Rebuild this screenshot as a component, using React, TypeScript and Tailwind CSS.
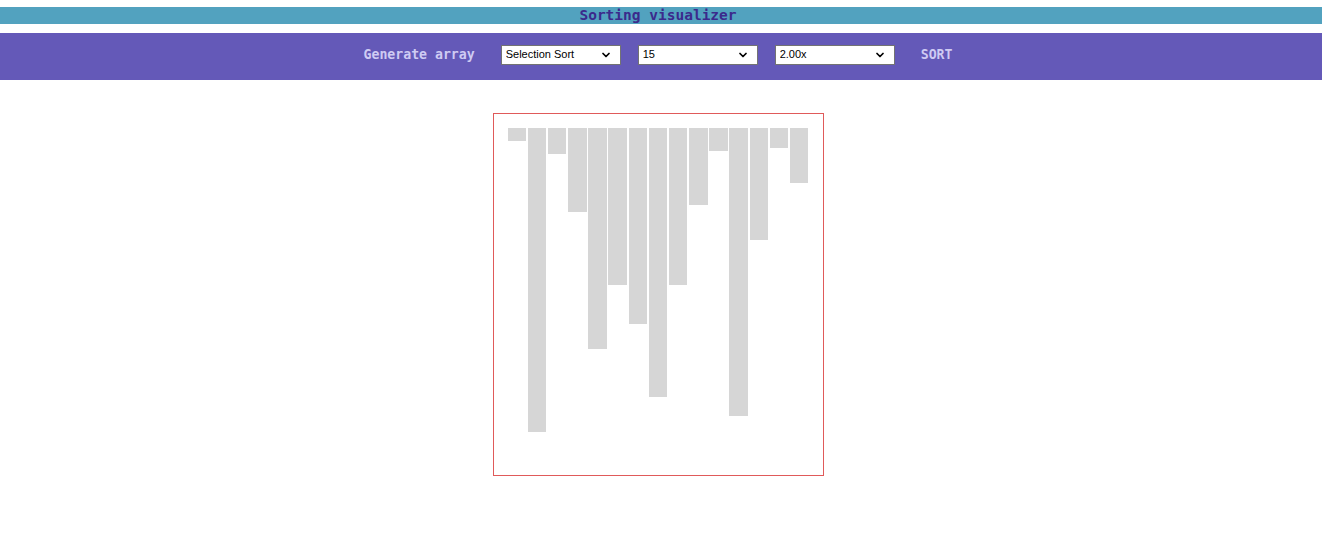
import { ChevronDown } from "lucide-react";

// bar heights in px, read off the screenshot
const bars = [13, 304, 26, 84, 221, 157, 196, 269, 157, 77, 23, 288, 112, 20, 55];

const mono = { fontFamily: '"DejaVu Sans Mono", "Liberation Mono", monospace' };

function FakeSelect({ value }: { value: string }) {
  return (
    <div className="relative h-[20px] w-[120px]">
      <select
        defaultValue={value}
        className="block h-[20px] w-[120px] appearance-none border border-neutral-500 bg-white pl-[4px] text-[11px] leading-none text-black outline-none"
        style={{ fontFamily: '"Liberation Sans", Arial, sans-serif' }}
      >
        <option>{value}</option>
      </select>
      <ChevronDown
        size={12}
        strokeWidth={3.5}
        className="pointer-events-none absolute right-[9px] top-[4px] text-black"
      />
    </div>
  );
}

export default function App() {
  return (
    <div className="min-h-[542px] w-full bg-white">
      {/* Title */}
      <div className="mt-[7px] flex h-[17px] items-center justify-center bg-[#52a2bf] pr-[6px]">
        <h1 className="text-[14.5px] font-bold leading-none text-[#3b2a8c]" style={mono}>
          Sorting visualizer
        </h1>
      </div>

      {/* Controls */}
      <div className="mt-[9px] flex h-[47px] items-center justify-center bg-[#6459b8] pb-[4px] pr-[6px]">
        <button className="mr-[26px] text-[13.2px] font-bold leading-none text-[#cfcbf3]" style={mono}>
          Generate array
        </button>
        <div className="flex items-center gap-[17px]">
          <FakeSelect value="Selection Sort" />
          <FakeSelect value="15" />
          <FakeSelect value="2.00x" />
        </div>
        <button className="ml-[26px] text-[13.2px] font-bold leading-none text-[#cfcbf3]" style={mono}>
          SORT
        </button>
      </div>

      {/* Chart */}
      <div className="mt-[33px] flex justify-center pr-[6px]">
        <div className="h-[363px] w-[331px] border border-[#e05a5a] px-[14px] pt-[14px]">
          <div className="flex items-start gap-[1.7px]">
            {bars.map((h, i) => (
              <div key={i} className="w-[18.5px] bg-[#d6d6d6]" style={{ height: h }} />
            ))}
          </div>
        </div>
      </div>
    </div>
  );
}
